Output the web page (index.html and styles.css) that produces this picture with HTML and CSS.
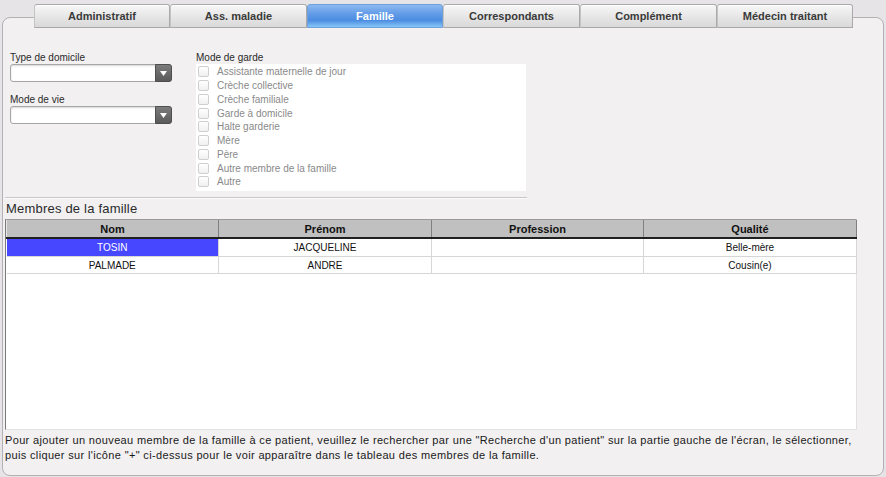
FILE: index.html
```html
<!DOCTYPE html>
<html lang="fr">
<head>
<meta charset="utf-8">
<title>Famille</title>
<link rel="stylesheet" href="styles.css">
</head>
<body>
<div class="tabs">
  <div class="tab w136">Administratif</div>
  <div class="tab w137">Ass. maladie</div>
  <div class="tab w136 active">Famille</div>
  <div class="tab w137">Correspondants</div>
  <div class="tab w137">Complément</div>
  <div class="tab w136">Médecin traitant</div>
</div>
<div class="panel">
  <div class="top">
    <div class="left-col">
      <div class="label">Type de domicile</div>
      <div class="select"><span class="select-btn"><svg width="7" height="5" viewBox="0 0 7 5"><path d="M0 0 H7 L3.5 5 Z" fill="#fff"/></svg></span></div>
      <div class="label label-gap">Mode de vie</div>
      <div class="select"><span class="select-btn"><svg width="7" height="5" viewBox="0 0 7 5"><path d="M0 0 H7 L3.5 5 Z" fill="#fff"/></svg></span></div>
    </div>
    <div class="right-col">
      <div class="label">Mode de garde</div>
      <div class="checklist">
        <div class="check"><span class="box"></span>Assistante maternelle de jour</div>
        <div class="check"><span class="box"></span>Crèche collective</div>
        <div class="check"><span class="box"></span>Crèche familiale</div>
        <div class="check"><span class="box"></span>Garde à domicile</div>
        <div class="check"><span class="box"></span>Halte garderie</div>
        <div class="check"><span class="box"></span>Mère</div>
        <div class="check"><span class="box"></span>Père</div>
        <div class="check"><span class="box"></span>Autre membre de la famille</div>
        <div class="check"><span class="box"></span>Autre</div>
      </div>
    </div>
  </div>
  <div class="rule"></div>
  <div class="section-title">Membres de la famille</div>
  <div class="grid">
    <table>
      <colgroup><col class="c212"><col class="c213"><col class="c212"><col class="c213"></colgroup>
      <thead>
        <tr><th>Nom</th><th>Prénom</th><th>Profession</th><th>Qualité</th></tr>
      </thead>
      <tbody>
        <tr class="r1"><td class="sel">TOSIN</td><td>JACQUELINE</td><td></td><td>Belle-mère</td></tr>
        <tr class="r2"><td>PALMADE</td><td>ANDRE</td><td></td><td>Cousin(e)</td></tr>
      </tbody>
    </table>
  </div>
  <p class="hint">Pour ajouter un nouveau membre de la famille à ce patient, veuillez le rechercher par une "Recherche d'un patient" sur la partie gauche de l'écran, le sélectionner,<br>puis cliquer sur l'icône "+" ci-dessus pour le voir apparaître dans le tableau des membres de la famille.</p>
</div>
</body>
</html>
```
FILE: styles.css
```css
html, body {
  margin: 0;
  padding: 0;
}
body {
  width: 886px;
  height: 477px;
  overflow: hidden;
  background: #e6e4e6;
  font-family: "Liberation Sans", Arial, sans-serif;
  color: #222;
}
.tabs {
  display: flex;
  margin-left: 34px;
  padding-top: 4px;
  position: relative;
  z-index: 1;
}
.tab {
  height: 24px;
  box-sizing: border-box;
  border: 1px solid #a9a9a9;
  border-left-color: #c4c4c4;
  border-radius: 3px 3px 0 0;
  background: linear-gradient(#f7f7f7, #e4e4e4 60%, #d9d9d9);
  font-weight: bold;
  font-size: 11px;
  color: #3a3a3a;
  display: flex;
  align-items: center;
  justify-content: center;
  box-shadow: inset 0 1px 0 #fff;
}
.w136 { width: 136px; }
.w137 { width: 137px; }
.tab.active {
  background: linear-gradient(#8cb8f0, #5d98e6 45%, #4c8de2 70%, #86c6f6);
  color: #fff;
  border-color: #6f9fd8;
  box-shadow: none;
}
.panel {
  margin: -11px 0 0 2px;
  width: 882px;
  height: 459px;
  box-sizing: border-box;
  border: 1px solid #b3b1b3;
  border-radius: 8px;
  background: #f2f0f1;
  overflow: hidden;
}
.top {
  display: flex;
  gap: 24px;
  margin: 33px 0 0 7px;
}
.left-col {
  width: 162px;
}
.label {
  font-size: 10px;
  line-height: 13px;
  height: 13px;
  color: #2a2a2a;
}
.label-gap {
  margin-top: 11px;
}
.select {
  height: 18px;
  box-sizing: border-box;
  border: 1px solid #a6a6a6;
  border-radius: 3px;
  background: #fff;
  box-shadow: inset 0 1px 2px #d8d8d8;
  display: flex;
  justify-content: flex-end;
}
.select-btn {
  width: 15px;
  margin: -1px -1px -1px 0;
  border-radius: 0 3px 3px 0;
  background: linear-gradient(#7c7c7c, #5a5a5a);
  border: 1px solid #4e4e4e;
  display: flex;
  align-items: center;
  justify-content: center;
}
.right-col {
  width: 330px;
}
.checklist {
  background: #fff;
  height: 127px;
  box-sizing: border-box;
  padding-top: 1px;
}
.check {
  height: 13.75px;
  display: flex;
  align-items: center;
  font-size: 10px;
  color: #8a8a8a;
}
.box {
  width: 11px;
  height: 11px;
  box-sizing: border-box;
  margin: 0 8px 0 2px;
  border: 1px solid #cfcfcf;
  border-radius: 2px;
  background: linear-gradient(#fff, #f0f0f0);
}
.rule {
  margin: 6px 0 0 2px;
  width: 522px;
  height: 1px;
  background: #c9c7c9;
  border-bottom: 1px solid #fbfbfb;
}
.section-title {
  margin: 2px 0 0 3px;
  font-size: 13px;
  line-height: 16px;
  color: #2b2b2b;
  letter-spacing: 0.2px;
}
.grid {
  margin: 2px 0 0 2px;
  width: 852px;
  height: 211px;
  box-sizing: border-box;
  background: #fff;
  border-left: 1px solid #7a7a7a;
  border-top: 1px solid #9a9a9a;
  border-right: 1px solid #e2e2e2;
  border-bottom: 1px solid #e2e2e2;
}
table {
  border-collapse: collapse;
  table-layout: fixed;
  width: 850px;
}
.c212 { width: 212px; }
.c213 { width: 213px; }
th {
  height: 17px;
  padding: 0;
  background: #c0c0c0;
  font-size: 11px;
  font-weight: bold;
  color: #111;
  border-right: 1px solid #808080;
  border-left: 1px solid #e6e6e6;
  border-bottom: 2px solid #202020;
}
td {
  padding: 0;
  text-align: center;
  font-size: 10px;
  color: #111;
  border-right: 1px solid #d6d6d6;
  border-bottom: 1px solid #d6d6d6;
}
.r1 td { height: 17px; }
.r2 td { height: 16px; }
td.sel {
  background: #4747ff;
  color: #fff;
}
.hint {
  margin: 3px 0 0 2px;
  width: 870px;
  white-space: nowrap;
  font-size: 11px;
  line-height: 15px;
  color: #1a1a1a;
  letter-spacing: 0.35px;
}
```
